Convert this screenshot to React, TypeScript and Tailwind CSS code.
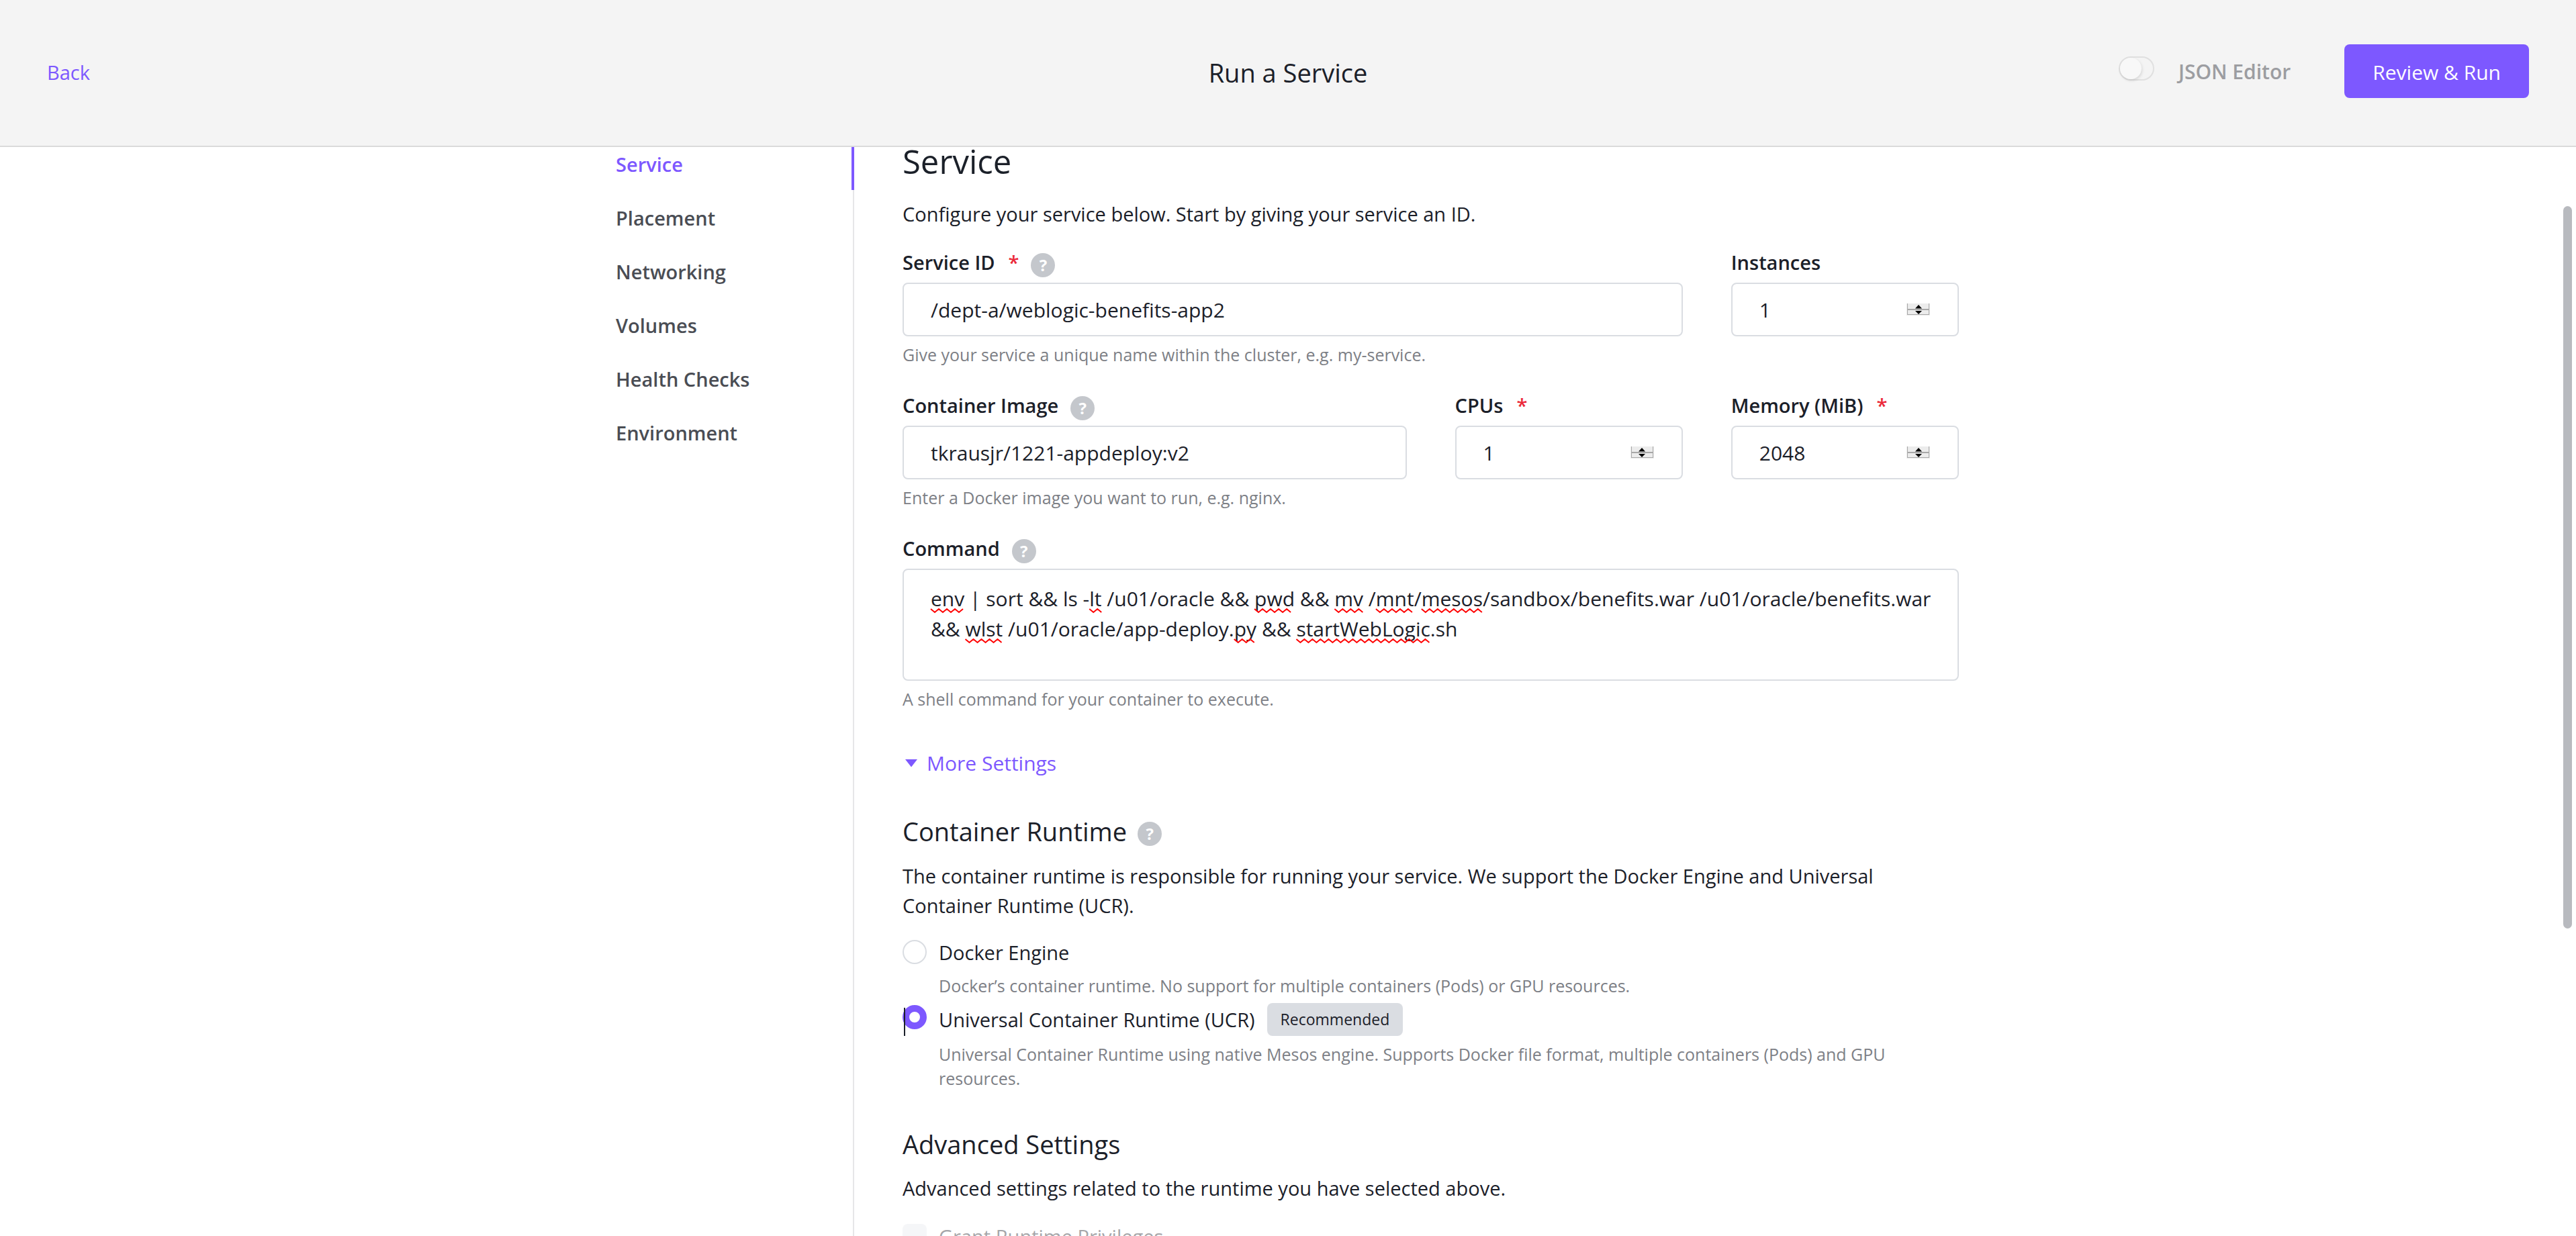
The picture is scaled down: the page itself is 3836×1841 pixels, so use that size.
import { useLayoutEffect, useRef, useState, type ReactNode } from "react";

const NAV = ["Service", "Placement", "Networking", "Volumes", "Health Checks", "Environment"];

const COMMAND =
  "env | sort && ls -lt /u01/oracle && pwd && mv /mnt/mesos/sandbox/benefits.war /u01/oracle/benefits.war && wlst /u01/oracle/app-deploy.py && startWebLogic.sh";

const UNKNOWN_WORDS = /\b(env|lt|pwd|mv|mnt|mesos|wlst|py|startWebLogic)\b/;

const CONTROL =
  "h-20 w-full rounded-lg border-2 border-[#dadde2] bg-white pl-10 text-[30px] text-[#1b2029] outline-none focus:border-[#7d58ff]";

function HelpIcon({ topic }: { topic: string }) {
  return (
    <button
      type="button"
      aria-label={`Help: ${topic}`}
      className="mt-2 flex size-9 shrink-0 items-center justify-center rounded-full bg-[#c4c7cc] text-[24px] leading-9 font-bold text-white"
    >
      ?
    </button>
  );
}

function FieldLabel({
  id,
  children,
  required,
  help,
}: {
  id: string;
  children: string;
  required?: boolean;
  help?: boolean;
}) {
  return (
    <div className="mb-[10px] flex h-10 items-center gap-[18px]">
      <label htmlFor={id} className="text-[29px] leading-10 font-semibold whitespace-nowrap">
        {children}
        {required && <span className="ml-5 text-[#eb293a]">*</span>}
      </label>
      {help && <HelpIcon topic={children} />}
    </div>
  );
}

function HelpText({ children }: { children: ReactNode }) {
  return <p className="mt-[9px] text-[25px] leading-9 text-[#7d8086]">{children}</p>;
}

function NumberInput({ id, initial }: { id: string; initial: number }) {
  const [value, setValue] = useState(String(initial));
  const step = (by: number) => setValue(String(Number(value) + by));
  return (
    <div className="relative">
      <input
        id={id}
        type="number"
        value={value}
        onChange={(e) => setValue(e.target.value)}
        className={`${CONTROL} pr-24 [appearance:textfield] [&::-webkit-inner-spin-button]:appearance-none`}
      />
      <div className="absolute top-[31px] right-[43px] flex h-[18px] w-[35px] flex-col border-x border-b border-[#ececec] bg-[#ececec]">
        <button
          type="button"
          aria-label="Increase"
          onClick={() => step(1)}
          className="flex h-[9px] items-end justify-center border-x border-b border-[#a8a8a8]"
        >
          <svg viewBox="0 0 10 6" className="h-[6px] w-[10px]">
            <path d="M5 0 10 5.5H0Z" fill="#000" />
          </svg>
        </button>
        <button
          type="button"
          aria-label="Decrease"
          onClick={() => step(-1)}
          className="flex h-[8px] items-end justify-center border-x border-y border-[#a8a8a8]"
        >
          <svg viewBox="0 0 10 6" className="h-[6px] w-[10px]">
            <path d="M0 1H10L5 6Z" fill="#000" />
          </svg>
        </button>
      </div>
    </div>
  );
}

/** Zigzag line running from x to x + width, just below a baseline. */
function zigzag(x: number, y: number, width: number) {
  const half = 6;
  let d = `M${x} ${y}`;
  for (let i = 1; i * half <= width; i++) d += `L${x + i * half} ${i % 2 ? y + 5 : y}`;
  return d;
}

function CommandInput({ id }: { id: string }) {
  const [value, setValue] = useState(COMMAND);
  const [marks, setMarks] = useState("");
  const mirror = useRef<HTMLDivElement>(null);

  useLayoutEffect(() => {
    const el = mirror.current;
    if (!el) return;
    const measure = () => {
      const origin = el.getBoundingClientRect();
      setMarks(
        Array.from(el.querySelectorAll("span"))
          .flatMap((span) => Array.from(span.getClientRects()))
          .map((r) => zigzag(r.left - origin.left, r.bottom - origin.top - 5, r.width))
          .join(""),
      );
    };
    measure();
    const observer = new ResizeObserver(measure);
    observer.observe(el);
    return () => observer.disconnect();
  }, [value]);

  const box =
    "col-start-1 row-start-1 block h-[167px] w-full rounded-lg border-2 pt-5 pr-8 pl-10 text-[30px] leading-[45px] break-words whitespace-pre-wrap";
  return (
    <div className="grid">
      <textarea
        id={id}
        value={value}
        spellCheck={false}
        onChange={(e) => setValue(e.target.value)}
        className={`${box} resize-none overflow-hidden border-[#dadde2] bg-white outline-none focus:border-[#7d58ff]`}
      />
      {/* Invisible copy of the text, used to find where each unknown word lies */}
      <div ref={mirror} aria-hidden="true" className={`${box} pointer-events-none invisible`}>
        {value.split(UNKNOWN_WORDS).map((part, i) => (i % 2 ? <span key={i}>{part}</span> : part))}
      </div>
      <svg
        aria-hidden="true"
        className="pointer-events-none col-start-1 row-start-1 size-full"
        fill="none"
        stroke="#ff0000"
        strokeWidth="2"
      >
        <path d={marks} />
      </svg>
    </div>
  );
}

function RuntimeOption({
  id,
  label,
  checked,
  onSelect,
  badge,
  caret,
  children,
}: {
  id: string;
  label: string;
  checked: boolean;
  onSelect: () => void;
  badge?: string;
  caret?: boolean;
  children: string;
}) {
  return (
    <div className="relative flex items-start gap-[18px]">
      <input
        id={id}
        type="radio"
        name="runtime"
        checked={checked}
        onChange={onSelect}
        className="mt-[3px] size-9 shrink-0 appearance-none rounded-full border-2 border-[#dadde2] bg-white checked:border-10 checked:border-[#7d58ff]"
      />
      {caret && <span className="absolute top-[7px] left-[2px] h-[42px] w-[2px] bg-[#1b2029]" />}
      <div>
        <div className="flex items-center gap-[18px]">
          <label htmlFor={id} className="text-[29px] leading-[44px]">
            {label}
          </label>
          {badge && (
            <span className="rounded-lg bg-[#dadde2] px-5 text-[23px] leading-[49px]">{badge}</span>
          )}
        </div>
        <HelpText>{children}</HelpText>
      </div>
    </div>
  );
}

export default function App() {
  const [runtime, setRuntime] = useState("ucr");
  return (
    <div className="flex h-screen flex-col overflow-hidden bg-white font-['Open_Sans','Noto_Sans',sans-serif] text-[#1b2029]">
      <header className="grid shrink-0 grid-cols-3 items-center border-b-2 border-[#dadada] bg-[#f4f4f4] px-[70px] pt-[66px] pb-[71px]">
        <a href="#back" className="justify-self-start pt-1 text-[29px] leading-[44px] text-[#7d58ff]">
          Back
        </a>
        <h1 className="justify-self-center pt-1 text-[38px] leading-[52px]">Run a Service</h1>
        <div className="flex items-center gap-20 justify-self-end">
          <label className="flex h-11 items-start gap-9 text-[30px] leading-[46px] font-semibold text-[#9c9da1]">
            <input
              type="checkbox"
              role="switch"
              className="h-9 w-[53px] appearance-none rounded-full border-2 border-[#e0e0e0] bg-[#f4f4f4] before:block before:size-8 before:rounded-full before:bg-[#f8f8f8] before:shadow-[1px_2px_4px_rgba(0,0,0,0.12)] checked:before:ml-auto"
            />
            JSON Editor
          </label>
          <button
            type="button"
            className="h-20 rounded-lg bg-[#7d58ff] px-[42px] pt-0.5 text-[30px] whitespace-nowrap text-white"
          >
            Review &amp; Run
          </button>
        </div>
      </header>

      <div className="relative min-h-0 flex-1 overflow-hidden pr-0.5">
        <div className="mx-auto flex h-full max-w-[2000px]">
          <nav className="w-[355px] shrink-0 border-r-2 border-[#e6e6e8]">
            <ul className="-mt-4 -mr-[2px]">
              {NAV.map((item, i) => (
                <li key={item}>
                  <a
                    href={`#${item}`}
                    aria-current={i === 0 ? "page" : undefined}
                    className="block border-r-4 border-transparent pt-1 text-[29px] leading-[76px] font-semibold text-[#4a4d54] aria-[current=page]:border-[#7d58ff] aria-[current=page]:text-[#7d58ff]"
                  >
                    {item}
                  </a>
                </li>
              ))}
            </ul>
          </nav>

          <main className="-mt-2 min-w-0 flex-1 pl-[72px]">
            <h2 className="text-[49px] leading-[58px]">Service</h2>
            <p className="mt-7 text-[29px] leading-[44px]">
              Configure your service below. Start by giving your service an ID.
            </p>

            <form className="mt-[30px]" onSubmit={(e) => e.preventDefault()}>
              <div className="grid grid-cols-4 gap-x-[72px] gap-y-[38px]">
                <div className="col-span-3">
                  <FieldLabel id="service-id" required help>
                    Service ID
                  </FieldLabel>
                  <input
                    id="service-id"
                    type="text"
                    defaultValue="/dept-a/weblogic-benefits-app2"
                    className={CONTROL}
                  />
                  <HelpText>Give your service a unique name within the cluster, e.g. my-service.</HelpText>
                </div>
                <div>
                  <FieldLabel id="instances">Instances</FieldLabel>
                  <NumberInput id="instances" initial={1} />
                </div>
                <div className="col-span-2">
                  <FieldLabel id="image" help>
                    Container Image
                  </FieldLabel>
                  <input
                    id="image"
                    type="text"
                    defaultValue="tkrausjr/1221-appdeploy:v2"
                    className={CONTROL}
                  />
                  <HelpText>Enter a Docker image you want to run, e.g. nginx.</HelpText>
                </div>
                <div>
                  <FieldLabel id="cpus" required>
                    CPUs
                  </FieldLabel>
                  <NumberInput id="cpus" initial={1} />
                </div>
                <div>
                  <FieldLabel id="memory" required>
                    Memory (MiB)
                  </FieldLabel>
                  <NumberInput id="memory" initial={2048} />
                </div>
                <div className="col-span-4">
                  <FieldLabel id="command" help>
                    Command
                  </FieldLabel>
                  <CommandInput id="command" />
                  <HelpText>A shell command for your container to execute.</HelpText>
                </div>
              </div>

              <button
                type="button"
                className="mt-14 ml-1 flex items-center gap-[14px] text-[30px] leading-[44px] text-[#7d58ff]"
              >
                <svg viewBox="0 0 18 12" className="h-3 w-[18px]">
                  <path d="M0 0H18L9 11.5Z" fill="currentColor" />
                </svg>
                More Settings
              </button>

              <div className="mt-[53px] flex items-center gap-4">
                <h3 className="text-[38px] leading-[52px]">Container Runtime</h3>
                <HelpIcon topic="Container Runtime" />
              </div>
              <p className="mt-[19px] text-[29px] leading-[44px]">
                The container runtime is responsible for running your service. We support the Docker
                Engine and Universal Container Runtime (UCR).
              </p>
              <div className="mt-[26px] flex flex-col gap-2">
                <RuntimeOption
                  id="docker"
                  label="Docker Engine"
                  checked={runtime === "docker"}
                  onSelect={() => setRuntime("docker")}
                >
                  Docker’s container runtime. No support for multiple containers (Pods) or GPU resources.
                </RuntimeOption>
                <RuntimeOption
                  id="ucr"
                  label="Universal Container Runtime (UCR)"
                  badge="Recommended"
                  caret
                  checked={runtime === "ucr"}
                  onSelect={() => setRuntime("ucr")}
                >
                  Universal Container Runtime using native Mesos engine. Supports Docker file format, multiple containers (Pods) and GPU resources.
                </RuntimeOption>
              </div>

              <h3 className="mt-[54px] text-[38px] leading-[52px]">Advanced Settings</h3>
              <p className="mt-[18px] text-[29px] leading-[44px]">
                Advanced settings related to the runtime you have selected above.
              </p>
              <div className="mt-7 flex items-start gap-[18px]">
                <input
                  id="privileges"
                  type="checkbox"
                  disabled
                  className="mt-[3px] size-9 shrink-0 appearance-none rounded-lg bg-[#f5f6f8]"
                />
                <label htmlFor="privileges" className="text-[29px] leading-[44px] text-[#a5a6a9]">
                  Grant Runtime Privileges
                </label>
              </div>
            </form>
          </main>
        </div>
        <div className="absolute top-[88px] right-[6px] h-[1076px] w-[13px] rounded-full bg-[#b8babf]" />
      </div>
    </div>
  );
}
